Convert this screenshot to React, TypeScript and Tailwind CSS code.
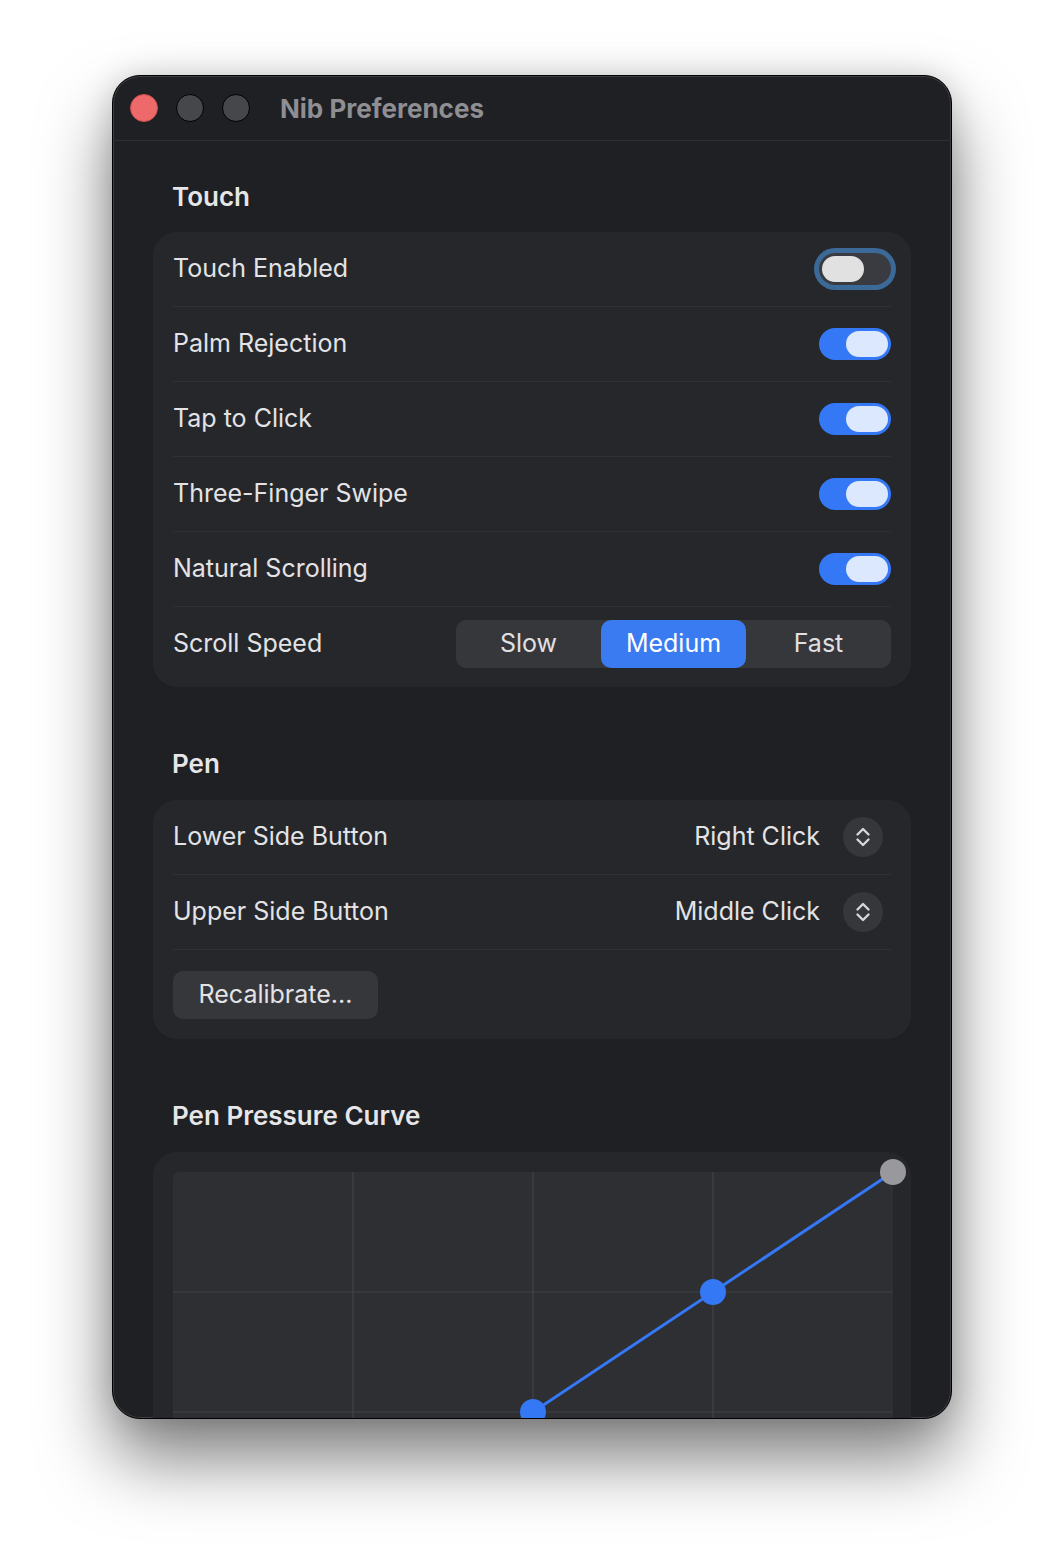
import React from "react";

const font = "font-['Inter','Noto_Sans',sans-serif]";

function Toggle({ on, focused }: { on: boolean; focused?: boolean }) {
  return (
    <div
      className={
        "flex w-[72px] h-[32px] rounded-full p-[3px] " +
        (on ? "bg-[#3478f6] justify-end" : "bg-[#3a3b40] justify-start") +
        (focused ? " ring-[5px] ring-[#3c6a98]" : "")
      }
    >
      <div className={"w-[42px] h-[26px] rounded-full " + (on ? "bg-[#dce8fd]" : "bg-[#e1e1e1]")} />
    </div>
  );
}

function Row({ label, children, last }: { label: string; children: React.ReactNode; last?: boolean }) {
  return (
    <div className={"flex items-center justify-between " + (last ? "h-[73px]" : "h-[75px] border-b border-[#303136]")}>
      <span className="text-[25px] text-[#e3e3e6]">{label}</span>
      {children}
    </div>
  );
}

function Popup({ value }: { value: string }) {
  return (
    <div className="flex items-center gap-[23px] pr-[8px]">
      <span className="text-[25px] text-[#e3e3e6]">{value}</span>
      <div className="w-[40px] h-[40px] rounded-full bg-[#36373b] flex items-center justify-center">
        <svg width="16" height="20" viewBox="0 0 16 20" fill="none" stroke="#d6d6d8" strokeWidth="2.4" strokeLinecap="round" strokeLinejoin="round">
          <path d="M2.5 7.5 L8 2 L13.5 7.5" />
          <path d="M2.5 12.5 L8 18 L13.5 12.5" />
        </svg>
      </div>
    </div>
  );
}

function Heading({ children, first }: { children: React.ReactNode; first?: boolean }) {
  return (
    <h2 className={"px-[19px] h-[30px] leading-[30px] text-[26px] font-semibold text-[#e6e6e9] " + (first ? "mb-[20px]" : "mt-[62px] mb-[21px]")}>
      {children}
    </h2>
  );
}

function PressureChart() {
  const w = 720;
  const h = 480;
  return (
    <svg width={w + 14} height={h + 14} viewBox={`0 -14 ${w + 14} ${h + 14}`} className="block overflow-visible">
      <rect x="0" y="0" width={w} height={h} rx="6" fill="#2e2f33" />
      {[180, 360, 540].map(x => (
        <line key={"v" + x} x1={x} y1={0} x2={x} y2={h} stroke="#414247" strokeWidth="1.2" />
      ))}
      {[120, 240, 360].map(y => (
        <line key={"h" + y} x1={0} y1={y} x2={w} y2={y} stroke="#414247" strokeWidth="1.2" />
      ))}
      <line x1={0} y1={h} x2={w} y2={0} stroke="#3478f6" strokeWidth="3" />
      <circle cx={0} cy={h} r="13" fill="#3478f6" />
      <circle cx={360} cy={240} r="13" fill="#3478f6" />
      <circle cx={540} cy={120} r="13" fill="#3478f6" />
      <circle cx={720} cy={0} r="13" fill="#98989d" />
    </svg>
  );
}

export default function App() {
  return (
    <div className={"min-h-[1568px] bg-white pt-[75px] pl-[112px] " + font}>
      <div className="w-[840px] h-[1344px] rounded-[28px] overflow-hidden bg-[#1f2024] border border-black shadow-[0_40px_70px_rgba(0,0,0,0.5),0_0_30px_rgba(0,0,0,0.15),inset_0_0_0_1px_rgba(255,255,255,0.14)]">
        {/* Title bar */}
        <div className="h-[65px] flex items-center pl-[17px] border-b border-[#2d2e32]">
          <div className="flex items-center gap-[18px]">
            <div className="w-[28px] h-[28px] rounded-full bg-[#ee6a6a] border border-[#c94f4f]" />
            <div className="w-[28px] h-[28px] rounded-full bg-[#46474b] border border-black" />
            <div className="w-[28px] h-[28px] rounded-full bg-[#46474b] border border-black" />
          </div>
          <span className="ml-[30px] text-[26px] font-bold text-[#8e8e93]">Nib Preferences</span>
        </div>

        <div className="px-[40px] pt-[41px]">
          <Heading first>Touch</Heading>
          <div className="rounded-[24px] bg-[#26272b] px-[20px] pb-[7px]">
            <Row label="Touch Enabled"><Toggle on={false} focused /></Row>
            <Row label="Palm Rejection"><Toggle on /></Row>
            <Row label="Tap to Click"><Toggle on /></Row>
            <Row label="Three-Finger Swipe"><Toggle on /></Row>
            <Row label="Natural Scrolling"><Toggle on /></Row>
            <Row label="Scroll Speed" last>
              <div className="grid grid-cols-3 w-[435px] h-[48px] rounded-[10px] bg-[#36373b] text-[25px]">
                <div className="flex items-center justify-center text-[#e0e0e2]">Slow</div>
                <div className="flex items-center justify-center rounded-[10px] bg-[#3a7bf1] text-white">Medium</div>
                <div className="flex items-center justify-center text-[#e0e0e2]">Fast</div>
              </div>
            </Row>
          </div>

          <Heading>Pen</Heading>
          <div className="rounded-[24px] bg-[#26272b] px-[20px] pb-[20px]">
            <Row label="Lower Side Button"><Popup value="Right Click" /></Row>
            <Row label="Upper Side Button"><Popup value="Middle Click" /></Row>
            <div className="pt-[21px]">
              <button className="h-[48px] w-[205px] rounded-[10px] bg-[#36373b] text-[25px] text-[#e3e3e6]">Recalibrate...</button>
            </div>
          </div>

          <Heading>Pen Pressure Curve</Heading>
          <div className="rounded-[24px] bg-[#26272b] px-[20px] pt-[20px] pb-[20px]">
            <div className="-mt-[14px]">
              <PressureChart />
            </div>
          </div>
        </div>
      </div>
    </div>
  );
}
